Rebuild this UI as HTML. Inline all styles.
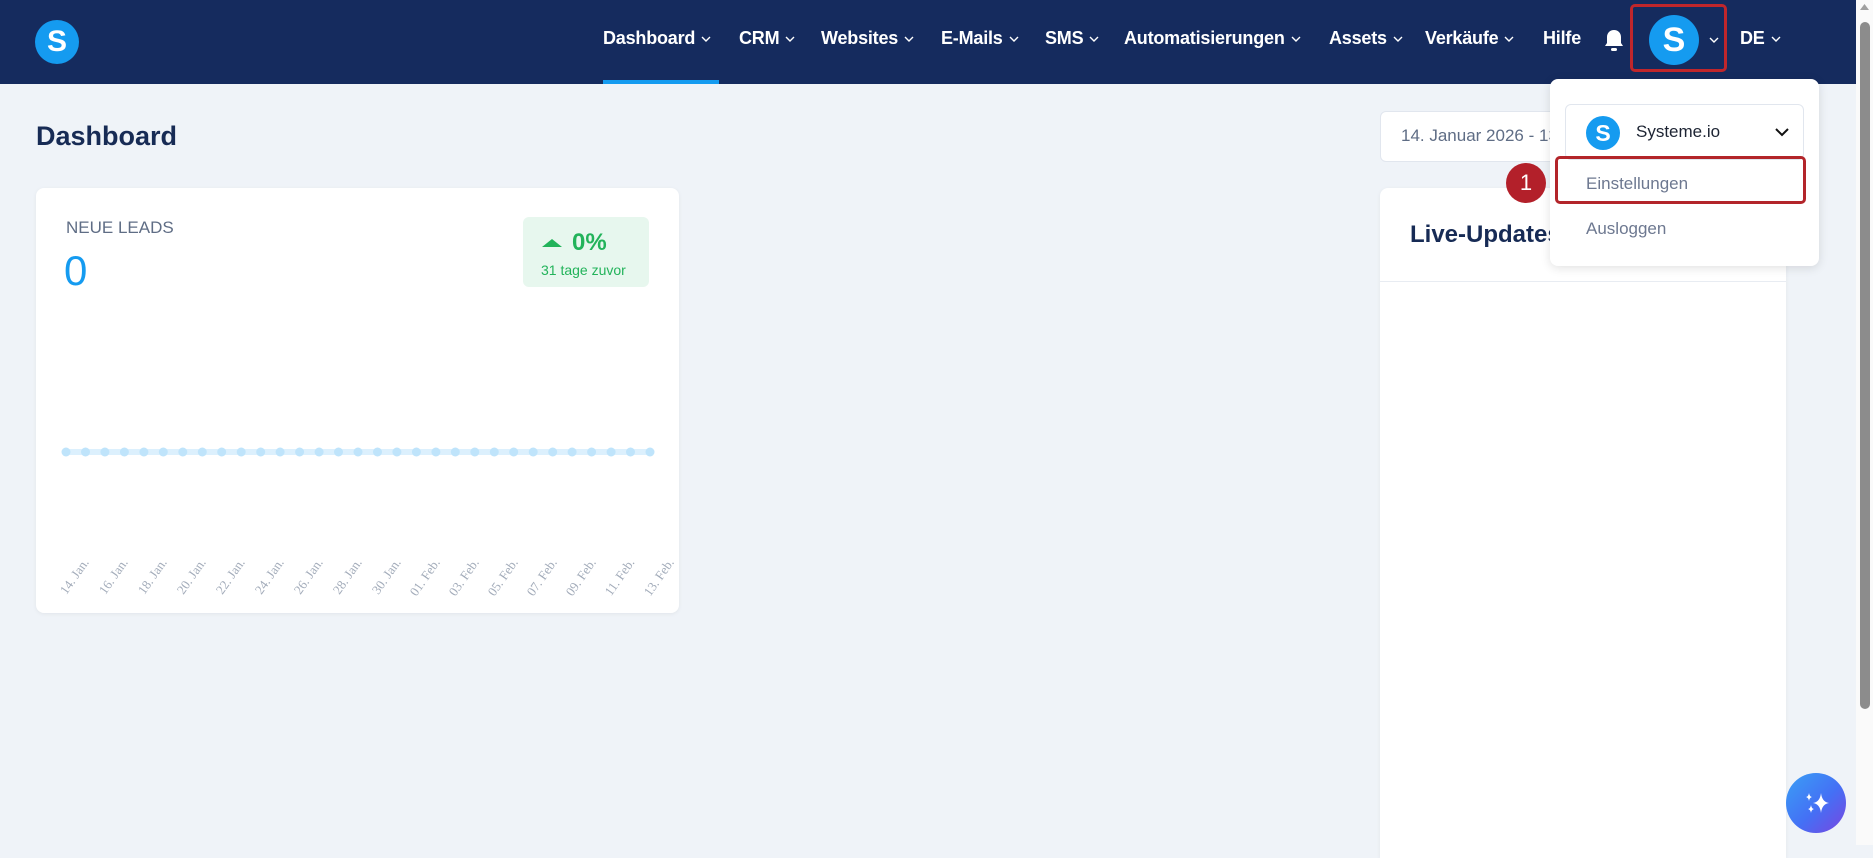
<!DOCTYPE html>
<html><head><meta charset="utf-8"><style>
*{margin:0;padding:0;box-sizing:border-box}
body{width:1873px;height:845px;overflow:hidden;background:#eff3f8;font-family:"Liberation Sans",sans-serif;position:relative}
.hdr{position:absolute;left:0;top:0;width:1856px;height:84px;background:#152b5e}
.nav{position:absolute;top:28px;color:#fff;font-weight:bold;font-size:18px;white-space:nowrap;letter-spacing:-0.2px}
.nav svg{margin-left:6px;vertical-align:2px}
.abs{position:absolute}
.card{position:absolute;background:#fff;border-radius:8px;box-shadow:0 1px 4px rgba(0,0,0,.06)}
.lbl{position:absolute;font-family:"Liberation Serif",serif;font-size:13px;color:#a3acba;transform:rotate(-55deg);transform-origin:right center;white-space:nowrap}
</style></head><body>
<div class="hdr"></div>
<div class="abs" style="left:35px;top:20px;width:44px;height:44px;border-radius:50%;background:#159bf0;color:#fff;font-weight:bold;font-size:30px;text-align:center;line-height:44px">S</div>

<div class="nav" style="left:603px">Dashboard<svg width="10" height="6"><path d="M1 1l4 4 4-4" stroke="#fff" fill="none" stroke-width="1.4"/></svg></div>
<div class="abs" style="left:603px;top:80px;width:116px;height:4px;background:#159bf0"></div>
<div class="nav" style="left:739px">CRM<svg width="10" height="6"><path d="M1 1l4 4 4-4" stroke="#fff" fill="none" stroke-width="1.4"/></svg></div>
<div class="nav" style="left:821px">Websites<svg width="10" height="6"><path d="M1 1l4 4 4-4" stroke="#fff" fill="none" stroke-width="1.4"/></svg></div>
<div class="nav" style="left:941px">E-Mails<svg width="10" height="6"><path d="M1 1l4 4 4-4" stroke="#fff" fill="none" stroke-width="1.4"/></svg></div>
<div class="nav" style="left:1045px">SMS<svg width="10" height="6"><path d="M1 1l4 4 4-4" stroke="#fff" fill="none" stroke-width="1.4"/></svg></div>
<div class="nav" style="left:1124px">Automatisierungen<svg width="10" height="6"><path d="M1 1l4 4 4-4" stroke="#fff" fill="none" stroke-width="1.4"/></svg></div>
<div class="nav" style="left:1329px">Assets<svg width="10" height="6"><path d="M1 1l4 4 4-4" stroke="#fff" fill="none" stroke-width="1.4"/></svg></div>
<div class="nav" style="left:1425px">Verkäufe<svg width="10" height="6"><path d="M1 1l4 4 4-4" stroke="#fff" fill="none" stroke-width="1.4"/></svg></div>
<div class="nav" style="left:1543px">Hilfe</div>
<svg class="abs" style="left:1603px;top:28px" width="22" height="24" viewBox="0 0 22 24"><path d="M11 2c-4 0-7 3-7 7v6l-2 3h18l-2-3V9c0-4-3-7-7-7z" fill="#fff"/><rect x="8" y="20" width="6" height="3" rx="1.5" fill="#fff"/></svg>
<div class="abs" style="left:1630px;top:4px;width:97px;height:68px;border:3px solid #c0262b;border-radius:5px"></div>
<div class="abs" style="left:1649px;top:15px;width:50px;height:50px;border-radius:50%;background:#159bf0;color:#fff;font-weight:bold;font-size:34px;text-align:center;line-height:50px">S</div>
<svg class="abs" style="left:1709px;top:37px" width="10" height="6"><path d="M1 1l4 4 4-4" stroke="#fff" fill="none" stroke-width="1.4"/></svg>
<div class="nav" style="left:1740px">DE<svg width="10" height="6"><path d="M1 1l4 4 4-4" stroke="#fff" fill="none" stroke-width="1.4"/></svg></div>

<div class="abs" style="left:36px;top:121px;font-size:27px;font-weight:bold;color:#172b55">Dashboard</div>

<div class="card" style="left:36px;top:188px;width:643px;height:425px">
 <div class="abs" style="left:30px;top:30px;font-size:17px;color:#5f6d85">NEUE LEADS</div>
 <div class="abs" style="left:28px;top:59px;font-size:42px;color:#159bf0">0</div>
 <div class="abs" style="left:487px;top:29px;width:126px;height:70px;background:#e7f7ee;border-radius:6px">
  <svg class="abs" style="left:19px;top:22px" width="20" height="8"><path d="M0 8L10 0 20 8z" fill="#22b35a"/></svg>
  <div class="abs" style="left:49px;top:12px;font-size:24px;font-weight:bold;color:#22b35a">0%</div>
  <div class="abs" style="left:18px;top:45px;font-size:14px;color:#22b35a">31 tage zuvor</div>
 </div>
 <svg class="abs" style="left:0;top:0" width="643" height="425">
  <line x1="30" y1="264" x2="614" y2="264" stroke="#dcf0fd" stroke-width="6"/>
  <g fill="#bfe4fb">
   <circle cx="30" cy="264" r="4.5"/><circle cx="49.5" cy="264" r="4.5"/><circle cx="68.9" cy="264" r="4.5"/><circle cx="88.4" cy="264" r="4.5"/><circle cx="107.9" cy="264" r="4.5"/><circle cx="127.3" cy="264" r="4.5"/><circle cx="146.8" cy="264" r="4.5"/><circle cx="166.3" cy="264" r="4.5"/><circle cx="185.7" cy="264" r="4.5"/><circle cx="205.2" cy="264" r="4.5"/><circle cx="224.7" cy="264" r="4.5"/><circle cx="244.1" cy="264" r="4.5"/><circle cx="263.6" cy="264" r="4.5"/><circle cx="283.1" cy="264" r="4.5"/><circle cx="302.5" cy="264" r="4.5"/><circle cx="322" cy="264" r="4.5"/><circle cx="341.5" cy="264" r="4.5"/><circle cx="360.9" cy="264" r="4.5"/><circle cx="380.4" cy="264" r="4.5"/><circle cx="399.9" cy="264" r="4.5"/><circle cx="419.3" cy="264" r="4.5"/><circle cx="438.8" cy="264" r="4.5"/><circle cx="458.3" cy="264" r="4.5"/><circle cx="477.7" cy="264" r="4.5"/><circle cx="497.2" cy="264" r="4.5"/><circle cx="516.7" cy="264" r="4.5"/><circle cx="536.1" cy="264" r="4.5"/><circle cx="555.6" cy="264" r="4.5"/><circle cx="575.1" cy="264" r="4.5"/><circle cx="594.5" cy="264" r="4.5"/><circle cx="614" cy="264" r="4.5"/>
  </g>
 </svg>
 <div class="lbl" style="right:593px;top:364px">14. Jan.</div>
 <div class="lbl" style="right:554px;top:364px">16. Jan.</div>
 <div class="lbl" style="right:515px;top:364px">18. Jan.</div>
 <div class="lbl" style="right:476px;top:364px">20. Jan.</div>
 <div class="lbl" style="right:437px;top:364px">22. Jan.</div>
 <div class="lbl" style="right:398px;top:364px">24. Jan.</div>
 <div class="lbl" style="right:359px;top:364px">26. Jan.</div>
 <div class="lbl" style="right:320px;top:364px">28. Jan.</div>
 <div class="lbl" style="right:281px;top:364px">30. Jan.</div>
 <div class="lbl" style="right:242px;top:364px">01. Feb.</div>
 <div class="lbl" style="right:203px;top:364px">03. Feb.</div>
 <div class="lbl" style="right:164px;top:364px">05. Feb.</div>
 <div class="lbl" style="right:125px;top:364px">07. Feb.</div>
 <div class="lbl" style="right:86px;top:364px">09. Feb.</div>
 <div class="lbl" style="right:47px;top:364px">11. Feb.</div>
 <div class="lbl" style="right:8px;top:364px">13. Feb.</div>
</div>

<div class="abs" style="left:1380px;top:111px;width:300px;height:51px;background:#fff;border:1px solid #e1e6ee;border-radius:6px;font-size:17px;color:#5f6d85;padding:14px 0 0 20px;white-space:nowrap;overflow:hidden">14. Januar 2026 - 13. Februar 2026</div>

<div class="card" style="left:1380px;top:188px;width:406px;height:670px;border-radius:8px 8px 0 0">
 <div class="abs" style="left:30px;top:33px;font-size:24px;font-weight:bold;color:#172b55">Live-Updates</div>
 <div class="abs" style="left:0;top:93px;width:406px;height:1px;background:#e8ecf2"></div>
</div>

<div class="abs" style="left:1550px;top:79px;width:269px;height:187px;background:#fff;border-radius:8px;box-shadow:0 2px 10px rgba(0,0,0,.12)">
 <div class="abs" style="left:15px;top:25px;width:239px;height:56px;border:1px solid #e1e6ee;border-radius:6px">
  <div class="abs" style="left:20px;top:11px;width:34px;height:34px;border-radius:50%;background:#159bf0;color:#fff;font-weight:bold;font-size:23px;text-align:center;line-height:34px">S</div>
  <div class="abs" style="left:70px;top:17px;font-size:17px;color:#1d2433">Systeme.io</div>
  <svg class="abs" style="left:209px;top:23px" width="14" height="9"><path d="M1 1l6 6 6-6" stroke="#111" fill="none" stroke-width="2"/></svg>
 </div>
 <div class="abs" style="left:36px;top:95px;font-size:17px;color:#6d7890">Einstellungen</div>
 <div class="abs" style="left:36px;top:140px;font-size:17px;color:#6d7890">Ausloggen</div>
</div>
<div class="abs" style="left:1555px;top:156px;width:251px;height:48px;border:3px solid #b3252a;border-radius:5px"></div>
<div class="abs" style="left:1506px;top:163px;width:40px;height:40px;border-radius:50%;background:#b3202a;color:#fff;font-size:22px;text-align:center;line-height:40px">1</div>

<div class="abs" style="left:1856px;top:0;width:17px;height:845px;background:#fafafa"></div>
<svg class="abs" style="left:1859px;top:3px" width="11" height="8"><path d="M5.5 1L10 7H1z" fill="#a0a0a0"/></svg>
<div class="abs" style="left:1860px;top:22px;width:10px;height:687px;background:#8c8c8c;border-radius:5px"></div>

<div class="abs" style="left:1786px;top:773px;width:60px;height:60px;border-radius:50%;background:linear-gradient(135deg,#3aa0f5,#4470f5 55%,#7a45e0)">
 <svg width="60" height="60"><path d="M35 20q1 9 8 10q-7 1-8 10q-1-9-8-10q7-1 8-10z" fill="#fff"/><path d="M23 20q.5 3.5 3 4q-2.5.5-3 4q-.5-3.5-3-4q2.5-.5 3-4z" fill="#fff"/><path d="M25 32q.5 3.5 3 4q-2.5.5-3 4q-.5-3.5-3-4q2.5-.5 3-4z" fill="#fff"/></svg>
</div>
</body></html>
